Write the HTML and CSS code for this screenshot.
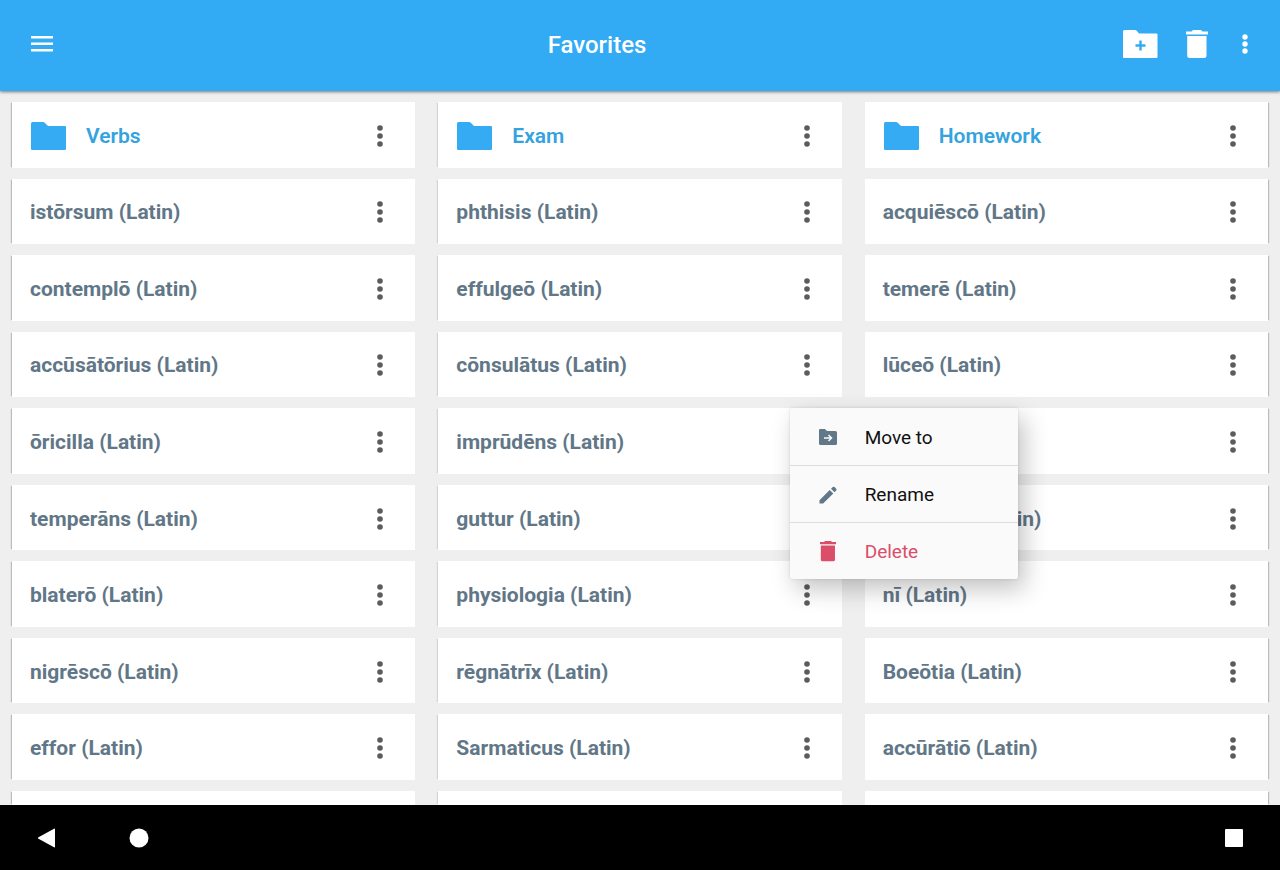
FILE: index.html
```html
<!DOCTYPE html>
<html lang="en">
<head>
  <meta charset="UTF-8">
  <meta name="viewport" content="width=device-width, initial-scale=1">
  <title>Favorites</title>
  <link rel="stylesheet" href="styles.css">
</head>
<body>
  <svg class="sprite" aria-hidden="true">
    <symbol id="dots" viewBox="0 0 8 24">
      <circle cx="4" cy="4" r="2.8"/><circle cx="4" cy="12" r="2.8"/><circle cx="4" cy="20" r="2.8"/>
    </symbol>
    <symbol id="folder" viewBox="0 0 36 28">
      <path d="M1.500 0H12Q13 0 14 1L16.500 3.500Q17.200 4 18 4H34Q35 4 35 5V27Q35 28 34 28H1Q0 28 0 27V1.500Q0 0 1.500 0Z"/>
    </symbol>
    <symbol id="trash" viewBox="0 0 22 28">
      <path d="M0 1.500H5.500L7 0H15L16.500 1.500H22V4.500H0ZM1.200 6H20.500V25.500Q20.500 28 18 28H3.700Q1.200 28 1.200 25.500Z"/>
    </symbol>
  </svg>

  <header class="toolbar">
    <button class="nav-toggle" aria-label="Menu">
      <svg width="22" height="16" viewBox="0 0 22 16"><path d="M0 0h22v2.400H0zM0 6.500h22v2.400H0zM0 13h22v2.400H0z"/></svg>
    </button>
    <h1>Favorites</h1>
    <div class="actions">
      <button aria-label="New folder">
        <svg width="35" height="28" viewBox="0 0 35 28">
          <path d="M1.500 0H12Q13 0 14 1L15.500 3Q16.200 3.500 17 3.500H33.500Q34.500 3.500 34.500 4.500V27Q34.500 28 33.500 28H1Q0 28 0 27V1.500Q0 0 1.500 0Z"/>
          <path class="plus" d="M17.500 10.500v10M12.500 15.500h10"/>
        </svg>
      </button>
      <button aria-label="Delete"><svg width="22" height="28"><use href="#trash"/></svg></button>
      <button aria-label="More"><svg width="20" height="20" viewBox="-6 0 20 20"><circle cx="4" cy="3" r="2.700"/><circle cx="4" cy="10" r="2.700"/><circle cx="4" cy="17" r="2.700"/></svg></button>
    </div>
  </header>

  <main>
    <ul class="cards">
      <li class="folder"><svg class="folder-icon"><use href="#folder"/></svg><span>Verbs</span><button class="more" aria-label="Options"><svg><use href="#dots"/></svg></button></li>
      <li class="folder"><svg class="folder-icon"><use href="#folder"/></svg><span>Exam</span><button class="more" aria-label="Options"><svg><use href="#dots"/></svg></button></li>
      <li class="folder"><svg class="folder-icon"><use href="#folder"/></svg><span>Homework</span><button class="more" aria-label="Options"><svg><use href="#dots"/></svg></button></li>

      <li><span>istōrsum (Latin)</span><button class="more" aria-label="Options"><svg><use href="#dots"/></svg></button></li>
      <li><span>phthisis (Latin)</span><button class="more" aria-label="Options"><svg><use href="#dots"/></svg></button></li>
      <li><span>acquiēscō (Latin)</span><button class="more" aria-label="Options"><svg><use href="#dots"/></svg></button></li>

      <li><span>contemplō (Latin)</span><button class="more" aria-label="Options"><svg><use href="#dots"/></svg></button></li>
      <li><span>effulgeō (Latin)</span><button class="more" aria-label="Options"><svg><use href="#dots"/></svg></button></li>
      <li><span>temerē (Latin)</span><button class="more" aria-label="Options"><svg><use href="#dots"/></svg></button></li>

      <li><span>accūsātōrius (Latin)</span><button class="more" aria-label="Options"><svg><use href="#dots"/></svg></button></li>
      <li><span>cōnsulātus (Latin)</span><button class="more" aria-label="Options"><svg><use href="#dots"/></svg></button></li>
      <li><span>lūceō (Latin)</span><button class="more" aria-label="Options"><svg><use href="#dots"/></svg></button></li>

      <li><span>ōricilla (Latin)</span><button class="more" aria-label="Options"><svg><use href="#dots"/></svg></button></li>
      <li class="open">
        <span>imprūdēns (Latin)</span>
        <button class="more" aria-label="Options"><svg><use href="#dots"/></svg></button>
        <div class="menu">
          <button>
            <svg width="20" height="20" viewBox="0 0 20 20"><path d="M2 1h5l2 2h8.500Q19 3 19 4.500v11Q19 17 17.500 17H2.500Q1 17 1 15.500V2Q1 1 2 1z"/><path class="arrow" d="M6 10h7.500M10.500 7l3 3-3 3"/></svg>
            Move to
          </button>
          <button>
            <svg width="20" height="20" viewBox="0 0 20 20"><path d="M1.500 15.200 11.700 5l3.600 3.600L5.100 18.500H1.500zM13 3.800l1.800-1.800q.9-.7 1.800 0l1.600 1.700q.7.800 0 1.700l-1.700 1.800z"/></svg>
            Rename
          </button>
          <button class="danger">
            <svg width="20" height="22" viewBox="-2 0 26 30"><use href="#trash" width="22" height="28"/></svg>
            Delete
          </button>
        </div>
      </li>
      <li><button class="more" aria-label="Options"><svg><use href="#dots"/></svg></button></li>

      <li><span>temperāns (Latin)</span><button class="more" aria-label="Options"><svg><use href="#dots"/></svg></button></li>
      <li><span>guttur (Latin)</span><button class="more" aria-label="Options"><svg><use href="#dots"/></svg></button></li>
      <li><span>frequentō (Latin)</span><button class="more" aria-label="Options"><svg><use href="#dots"/></svg></button></li>

      <li><span>blaterō (Latin)</span><button class="more" aria-label="Options"><svg><use href="#dots"/></svg></button></li>
      <li><span>physiologia (Latin)</span><button class="more" aria-label="Options"><svg><use href="#dots"/></svg></button></li>
      <li><span>nī (Latin)</span><button class="more" aria-label="Options"><svg><use href="#dots"/></svg></button></li>

      <li><span>nigrēscō (Latin)</span><button class="more" aria-label="Options"><svg><use href="#dots"/></svg></button></li>
      <li><span>rēgnātrīx (Latin)</span><button class="more" aria-label="Options"><svg><use href="#dots"/></svg></button></li>
      <li><span>Boeōtia (Latin)</span><button class="more" aria-label="Options"><svg><use href="#dots"/></svg></button></li>

      <li><span>effor (Latin)</span><button class="more" aria-label="Options"><svg><use href="#dots"/></svg></button></li>
      <li><span>Sarmaticus (Latin)</span><button class="more" aria-label="Options"><svg><use href="#dots"/></svg></button></li>
      <li><span>accūrātiō (Latin)</span><button class="more" aria-label="Options"><svg><use href="#dots"/></svg></button></li>

      <li></li>
      <li></li>
      <li></li>
    </ul>
  </main>

  <nav class="system-bar">
    <button aria-label="Back"><svg width="20" height="20" viewBox="0 0 20 20"><path d="M1.500 9.200 17 .7q1-.5 1 .6v17.400q0 1.100-1 .6L1.500 10.800q-1.300-.8 0-1.600z"/></svg></button>
    <button aria-label="Home"><svg width="20" height="20" viewBox="0 0 20 20"><circle cx="10" cy="10" r="9.500"/></svg></button>
    <button class="recent" aria-label="Recent apps"><svg width="20" height="20" viewBox="0 0 20 20"><rect x="1" y="1" width="18" height="18" rx="1"/></svg></button>
  </nav>
</body>
</html>
```

FILE: styles.css
```css
* {
  box-sizing: border-box;
}

body {
  margin: 0;
  height: 100vh;
  display: flex;
  flex-direction: column;
  background: #efefef;
  font-family: Roboto, sans-serif;
}

button {
  padding: 0;
  border: 0;
  background: none;
  font: inherit;
  color: inherit;
  cursor: pointer;
}

svg {
  display: block;
  fill: currentColor;
}

.sprite {
  position: absolute;
  width: 0;
  height: 0;
}

/* top bar */
.toolbar {
  position: relative;
  z-index: 1;
  flex: none;
  display: flex;
  align-items: center;
  height: 91px;
  padding-bottom: 3px;
  background: #32aaf4;
  color: #fff;
  box-shadow: 0 1px 3px rgba(0, 0, 0, 0.5);
}

.nav-toggle {
  width: 84px;
  padding-left: 31px;
}

.toolbar h1 {
  flex: 1;
  margin: 0;
  padding-top: 2px;
  text-align: center;
  font-size: 24px;
  font-weight: 500;
  line-height: 28px;
}

.actions {
  width: 170px;
  padding: 0 25px 0 13px;
  display: flex;
  align-items: center;
  justify-content: space-between;
}

.plus {
  fill: none;
  stroke: #32aaf4;
  stroke-width: 2.4;
}

/* favorites */
main {
  flex: 1;
  min-height: 0;
  overflow: hidden;
}

.cards {
  height: 100%;
  margin: 0;
  padding: 11px 12px 0;
  list-style: none;
  display: grid;
  grid-template-columns: repeat(3, 1fr);
  grid-template-rows: repeat(9, minmax(0, 1fr)) 14px;
  gap: 11px 23px;
}

.cards li {
  display: flex;
  align-items: center;
  padding: 2px 25px 0 18px;
  background: #fff;
  color: #617787;
  font-size: 21px;
  font-weight: 700;
  line-height: 26px;
  box-shadow: -2px 0 1px -1px #d4d4d4;
}

.cards li:nth-child(3n + 1) {
  box-shadow: -2px 0 1px -1px #bbb;
}

.cards li:nth-child(3n) {
  box-shadow: 2px 0 1px -1px #bbb;
}

.cards .folder {
  color: #34a3de;
  font-weight: 600;
}

.folder-icon {
  width: 36px;
  height: 28px;
  margin: 0 19px 0 1px;
  fill: #35abf3;
}

.more {
  margin-left: auto;
  width: 20px;
  color: #5c5c5c;
}

.more svg {
  width: 8px;
  height: 24px;
  margin: 0 auto;
}

/* popup */
.cards .open {
  position: relative;
}

.menu {
  position: absolute;
  top: 0;
  right: -176px;
  z-index: 2;
  width: 228px;
  background: #fafafa;
  border-radius: 2px;
  box-shadow: 6px 10px 24px rgba(0, 0, 0, 0.24), 0 0 3px rgba(0, 0, 0, 0.12);
}

.menu button {
  display: flex;
  align-items: center;
  gap: 27px;
  width: 100%;
  height: 57px;
  padding: 2px 28px 0;
  color: #111;
  font-size: 19px;
  font-weight: 400;
}

.menu button + button {
  border-top: 1px solid #ddd;
}

.menu svg {
  color: #607888;
}

.menu .arrow {
  fill: none;
  stroke: #fafafa;
  stroke-width: 1.5;
}

.menu .danger,
.menu .danger svg {
  color: #db4d68;
}

/* android navigation */
.system-bar {
  flex: none;
  display: flex;
  align-items: center;
  gap: 72px;
  height: 65px;
  padding: 0 36px 0 37px;
  background: #000;
  color: #fff;
}

.recent {
  margin-left: auto;
}
```
